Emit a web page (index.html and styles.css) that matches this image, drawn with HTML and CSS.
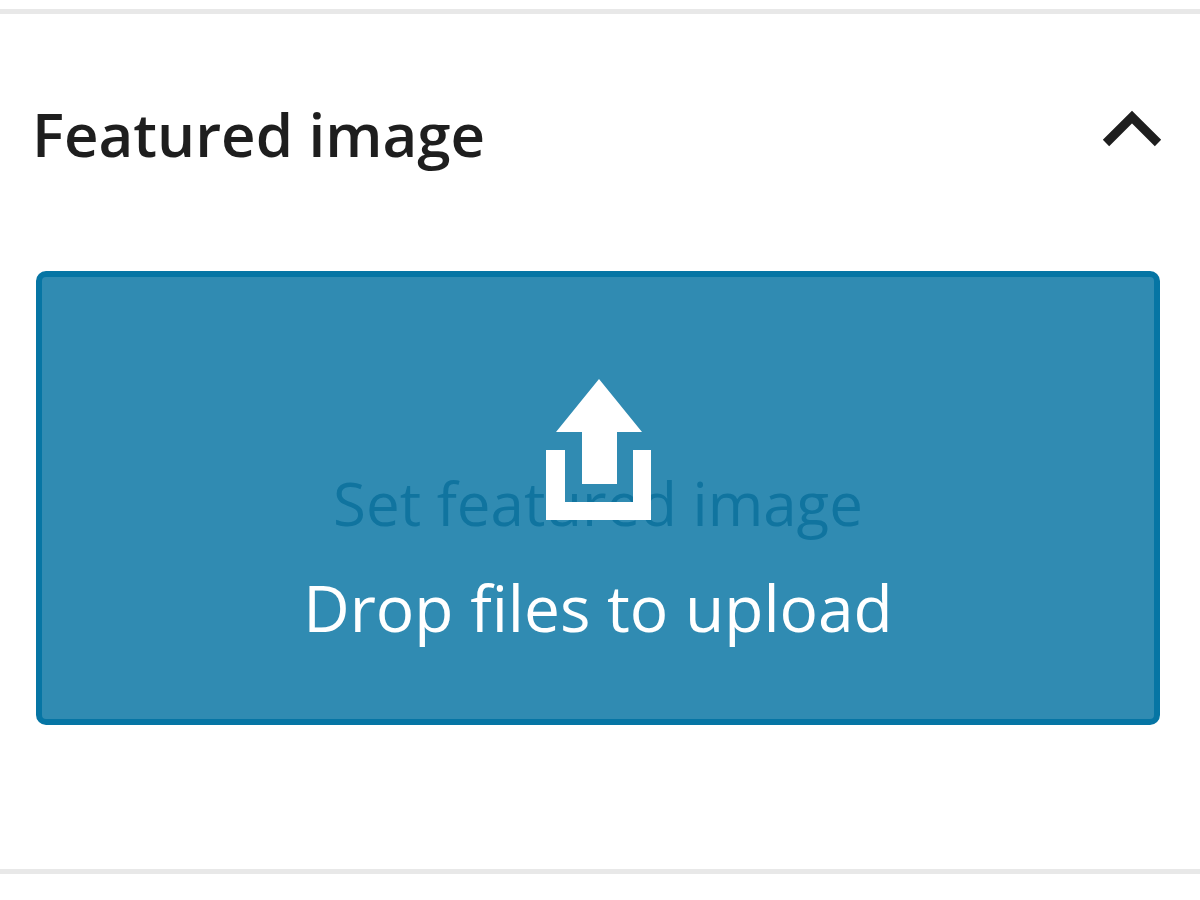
FILE: index.html
```html
<!DOCTYPE html>
<html lang="en">
<head>
<meta charset="utf-8">
<title>Featured image</title>
<link rel="stylesheet" href="styles.css">
</head>
<body>
<section class="panel">
  <h2 class="panel-title">
    <button class="panel-toggle" type="button" aria-expanded="true" aria-controls="featured-body">
      <span>Featured image</span>
      <svg class="chevron" viewBox="0 0 60 50" aria-hidden="true"><path d="M4 34 30 8 56 34" fill="none" stroke="#1e1e1e" stroke-width="9"/></svg>
    </button>
  </h2>
  <div class="panel-body" id="featured-body">
    <div class="dropzone">
      <button class="set-image" type="button">Set featured image</button>
      <div class="overlay">
        <svg class="upload-icon" viewBox="0 0 108 144" aria-hidden="true"><path d="M55 1 98 54H73V106H38V54H12ZM2 72H21V124H89V72H107V142H2Z" fill="#fff"/></svg>
        <span class="overlay-text">Drop files to upload</span>
      </div>
    </div>
  </div>
</section>
</body>
</html>
```
FILE: styles.css
```css
* { box-sizing: border-box; }

body {
  margin: 0;
  background: #fff;
  color: #1e1e1e;
  font-family: "Open Sans", "Noto Sans", sans-serif;
  font-size: 64px;
  line-height: 80px;
}

.panel {
  margin-top: 9px;
  border-top: 5px solid #e8e8e8;
  border-bottom: 5px solid #e8e8e8;
}

.panel-title {
  margin: 0;
  font-size: 60px;
}

.panel-toggle {
  display: flex;
  align-items: center;
  justify-content: space-between;
  width: 100%;
  padding: 80px 38px 97px 32px;
  border: 0;
  background: none;
  color: inherit;
  font: inherit;
  font-weight: 600;
  text-align: left;
}

.chevron {
  width: 60px;
  height: 50px;
}

.panel-body {
  padding: 0 40px 144px 36px;
}

.dropzone {
  position: relative;
}

.set-image {
  display: block;
  width: 100%;
  padding: 192px 32px 182px;
  border: 0;
  border-radius: 10px;
  background: #fff;
  color: #507f98;
  font: inherit;
  font-size: 60px;
}

.overlay {
  position: absolute;
  inset: 0;
  display: flex;
  flex-direction: column;
  align-items: center;
  justify-content: center;
  gap: 46px;
  padding-top: 30px;
  border: 6px solid #0675a4;
  border-radius: 10px;
  background: rgba(2, 113, 161, 0.82);
  color: #fff;
  pointer-events: none;
}

.upload-icon {
  width: 108px;
  height: 144px;
}
```
